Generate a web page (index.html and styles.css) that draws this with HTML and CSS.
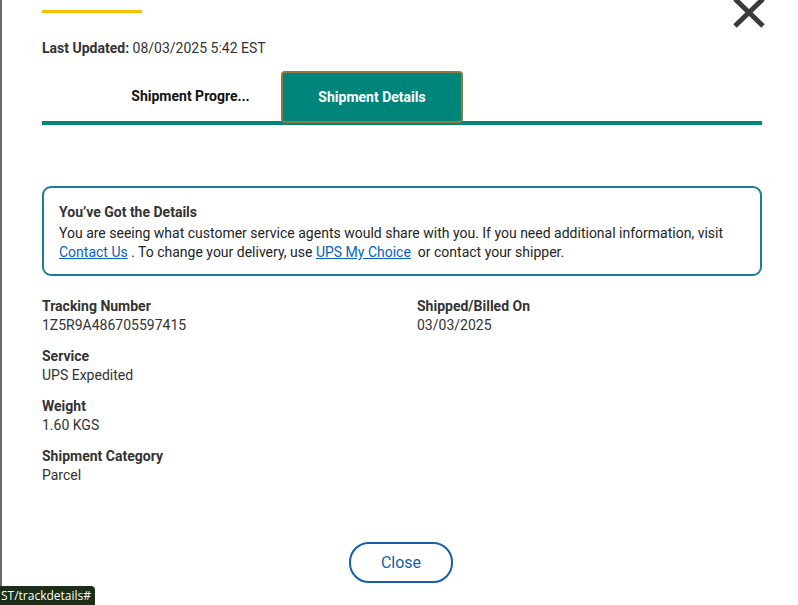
FILE: index.html
```html
<!DOCTYPE html>
<html lang="en">
<head>
<meta charset="utf-8">
<title>Track Details</title>
<link rel="stylesheet" href="styles.css">
</head>
<body>
<div class="frame">
  <div class="edge"></div>
  <main class="modal">
    <div class="accent"></div>
    <button class="close-x" aria-label="Close">
      <svg width="36" height="30" viewBox="0 0 36 30"><path d="M3 -1 L31 26 M31 -1 L3 26" stroke="#3a3a3a" stroke-width="5" stroke-linecap="butt" fill="none"/></svg>
    </button>
    <p class="updated"><strong>Last Updated:</strong> 08/03/2025 5:42 EST</p>
    <div class="tabs">
      <button class="tab">Shipment Progre...</button>
      <button class="tab active">Shipment Details</button>
    </div>
    <section class="notice">
      <h2>You’ve Got the Details</h2>
      <p>You are seeing what customer service agents would share with you. If you need additional information, visit <a href="#">Contact Us</a> . To change your delivery, use <a href="#">UPS My Choice</a>&nbsp; or contact your shipper.</p>
    </section>
    <div class="details">
      <div class="col">
        <div class="item"><div class="label">Tracking Number</div><div class="value">1Z5R9A486705597415</div></div>
        <div class="item"><div class="label">Service</div><div class="value">UPS Expedited</div></div>
        <div class="item"><div class="label">Weight</div><div class="value">1.60 KGS</div></div>
        <div class="item"><div class="label">Shipment Category</div><div class="value">Parcel</div></div>
      </div>
      <div class="col">
        <div class="item"><div class="label">Shipped/Billed On</div><div class="value">03/03/2025</div></div>
      </div>
    </div>
    <div class="actions">
      <button class="close-btn">Close</button>
    </div>
  </main>
</div>
<div class="status">ST/trackdetails#</div>
</body>
</html>
```
FILE: styles.css
```css
* { box-sizing: border-box; }
html, body { margin: 0; padding: 0; background: #fff; }
body {
  font-family: Roboto, "Liberation Sans", Arial, sans-serif;
  color: #333;
  width: 798px;
  height: 605px;
  overflow: hidden;
}
.frame { display: flex; height: 605px; }
.edge { width: 2px; background: #6b6b6b; flex: none; }
.modal {
  position: relative;
  flex: 1;
  padding: 10px 36px 0 40px;
}
.accent { width: 100px; height: 3px; background: #f2c100; }
.close-x {
  position: absolute;
  top: 0; right: 30px;
  width: 36px; height: 30px;
  padding: 0; border: 0; background: none;
}
.close-x svg { display: block; }
.updated {
  margin: 27px 0 0;
  font-size: 14px;
  line-height: 17px;
  color: #333;
}
.updated strong { font-weight: 700; }
.tabs {
  display: flex;
  margin-top: 14px;
  border-bottom: 4px solid #00857a;
  height: 54px;
}
.tab {
  font-family: inherit;
  font-size: 14px;
  font-weight: 700;
  color: #121212;
  background: none;
  border: 0;
  width: 239px;
  padding: 0;
  height: 50px;
  text-align: center;
  padding-left: 58px;
}
.tab.active {
  width: 182px;
  padding-left: 0;
  background: #00857a;
  color: #fff;
  border: 2px solid #8c7a3e;
  border-radius: 4px;
  height: 52px;
}
.notice {
  margin-top: 61px;
  border: 2px solid #1e7a9a;
  border-radius: 9px;
  padding: 15px 15px 12px;
}
.notice h2 {
  margin: 0 0 2px;
  font-size: 14px;
  line-height: 19px;
  font-weight: 700;
  color: #333;
}
.notice p {
  margin: 0;
  font-size: 14px;
  line-height: 19px;
  color: #242424;
}
.notice a { color: #0662bb; text-decoration: underline; }
.details {
  display: grid;
  grid-template-columns: 375px 1fr;
  margin-top: 21px;
}
.item { margin-bottom: 12px; }
.label {
  font-size: 14px;
  line-height: 19px;
  font-weight: 700;
  color: #333;
}
.value {
  font-size: 14px;
  line-height: 19px;
  color: #333;
}
.actions {
  display: flex;
  justify-content: center;
  margin-top: 45px;
}
.close-btn {
  font-family: inherit;
  font-size: 16px;
  color: #1560a8;
  background: #fff;
  border: 2px solid #1560a8;
  border-radius: 20px;
  width: 104px;
  height: 41px;
  margin-left: -2px;
}
.status {
  position: absolute;
  left: 0; bottom: 0;
  height: 19px;
  padding: 0 4px 0 1px;
  background: #1a2e1a;
  color: #fff;
  font-family: "Open Sans", "Liberation Sans", sans-serif;
  font-size: 12px;
  line-height: 19px;
  border-top-right-radius: 4px;
}
```
